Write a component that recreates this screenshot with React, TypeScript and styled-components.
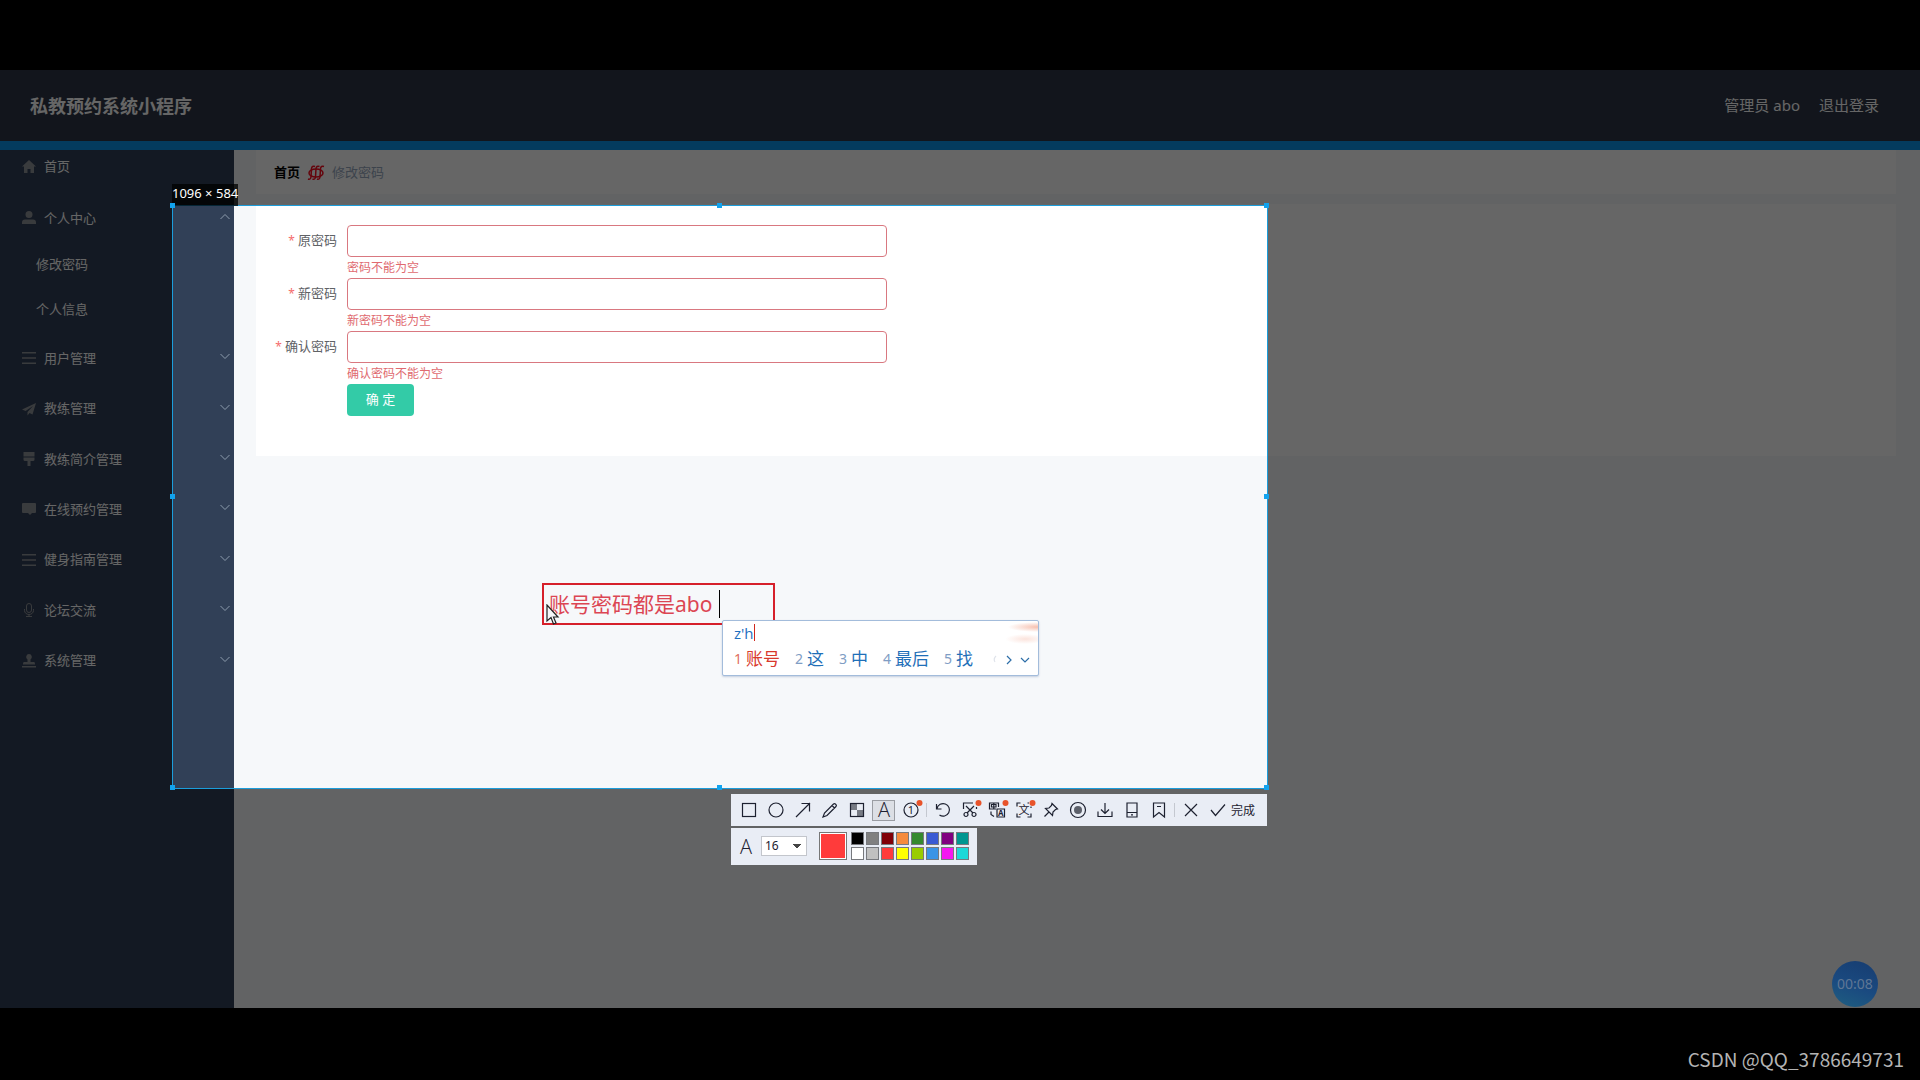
import React from "react";
import styled, { createGlobalStyle } from "styled-components";

const GlobalStyle = createGlobalStyle`
  *, *::before, *::after { box-sizing: border-box; }
  body {
    margin: 0;
    background: #000;
    font-family: "Noto Sans", "Noto Sans CJK SC", sans-serif;
    font-size: 13px;
  }
  button, input, select { font: inherit; }
  ul, ol { list-style: none; margin: 0; padding: 0; }
`;

const Page = styled.div`
  min-height: 100vh;
  display: flex;
  flex-direction: column;
  padding-top: 70px;
`;

const Stage = styled.div`
  position: relative;
  overflow: hidden;
  flex: 1;
  display: flex;
  flex-direction: column;
  background: #f6f8fa;
`;

const Credit = styled.footer`
  height: 72px;
  padding: 31px 16px 0;
  text-align: right;
  color: #b4b4b4;
  font-family: "Noto Sans CJK SC", sans-serif;
  font-size: 19px;
  line-height: 40px;
`;

const Header = styled.header`
  display: flex;
  align-items: center;
  justify-content: space-between;
  height: 80px;
  padding: 0 41px 2px 30px;
  background: #2d3646;
  border-bottom: 9px solid #0a94ec;
  color: #fff;
`;

const Title = styled.h1`
  margin: 0;
  font-size: 18px;
  font-weight: 700;
`;

const Account = styled.div`
  display: flex;
  gap: 19px;
  padding-bottom: 1px;
  font-size: 15px;
`;

const HeaderLink = styled.a`
  color: #fff;
  text-decoration: none;
`;

const Body = styled.div`
  flex: 1;
  display: flex;
`;

const Sidebar = styled.nav`
  width: 234px;
  background: #314057;
`;

const MenuGroup = styled.ul`
  display: flex;
  flex-direction: column;
  min-height: 353px;
`;

const MenuRow = styled.li<{ $tall?: boolean }>`
  flex: ${(p) => (p.$tall ? "1" : "none")};
  display: flex;
  align-items: center;
  padding: 0 3px 0 22px;
`;

const TopMenu = styled.ul`
  ${MenuRow} { height: 50px; }
  ${MenuRow}:first-child { height: 30px; margin-bottom: 12px; }
`;

const MenuLink = styled.a`
  flex: 1;
  display: flex;
  align-items: center;
  gap: 8px;
  color: #fff;
  text-decoration: none;
`;

const SubLink = styled.a`
  display: block;
  padding-left: 36px;
  line-height: 45px;
  color: #fff;
  text-decoration: none;
`;

const MenuIcon = styled.svg`
  width: 14px;
  height: 14px;
  margin-top: 2px;
  fill: #909399;
  stroke: none;
`;

const Chevron = styled.svg`
  width: 12px;
  height: 12px;
  fill: none;
  stroke: #8d9cad;
  stroke-width: 1;
`;

const Main = styled.main`
  flex: 1;
  display: flex;
  flex-direction: column;
  gap: 10px;
  padding: 0 24px 0 22px;
`;

const Crumbs = styled.nav`
  display: flex;
  align-items: center;
  gap: 7px;
  height: 44px;
  padding: 0 18px 2px;
  background: #fff;
`;

const CrumbHome = styled.a`
  color: #000;
  font-weight: 700;
  text-decoration: none;
`;

const CrumbMark = styled.svg`
  width: 18px;
  height: 16px;
  margin-top: 3px;
  fill: none;
  stroke: #fa0a1e;
  stroke-width: 1.5;
`;

const CrumbHere = styled.span`
  color: #97a8be;
`;

const Card = styled.form`
  padding: 21px 0 40px;
  background: #fff;
`;

const Field = styled.div`
  display: grid;
  grid-template-columns: 81px minmax(0, 540px);
  column-gap: 10px;
`;

const FieldLabel = styled.label`
  text-align: right;
  line-height: 30px;
  color: #606266;

  &::before {
    content: "*";
    margin-right: 3px;
    color: #f56c6c;
    font-size: 12px;
  }
`;

const FieldInput = styled.input`
  width: 100%;
  height: 32px;
  padding: 0 12px;
  border: 1px solid #d97880;
  border-radius: 4px;
  background: #fff;
  outline: none;
`;

const FieldError = styled.p`
  grid-column: 2;
  margin: 0;
  font-size: 12px;
  line-height: 21px;
  color: #e06a70;
`;

const Submit = styled.button`
  display: block;
  width: 67px;
  height: 32px;
  margin-left: 91px;
  padding: 0 0 3px;
  border: 0;
  border-radius: 4px;
  background: #33cba7;
  color: #fff;
`;

/* Screen-capture layer: everything outside the selection is dimmed. */
const Selection = styled.div`
  position: absolute;
  left: 172px;
  top: 135px;
  width: 1096px;
  height: 584px;
  border: 1px solid #1b9ddb;
  box-shadow: 0 0 0 3000px rgba(0, 0, 0, 0.6);
`;

const Handle = styled.i<{ $x: string; $y: string }>`
  position: absolute;
  left: ${(p) => p.$x};
  top: ${(p) => p.$y};
  width: 5px;
  height: 5px;
  margin: -3px;
  background: #12a3ee;
`;

const SizeTag = styled.div`
  position: absolute;
  left: -1px;
  bottom: 100%;
  padding-bottom: 4px;
  background: rgba(0, 0, 0, 0.75);
  color: #fff;
  font-size: 13px;
  line-height: 18px;
  white-space: nowrap;
`;

const Note = styled.div`
  position: absolute;
  left: 369px;
  top: 377px;
  width: 233px;
  height: 42px;
  border: 2px solid #d6202a;
`;

const NoteInput = styled.input`
  width: 100%;
  height: 36px;
  padding: 0 5px;
  border: 0;
  outline: none;
  background: transparent;
  color: #dc4653;
  font-size: 21px;
`;

const NoteCaret = styled.i`
  position: absolute;
  left: 175px;
  top: 5px;
  width: 1px;
  height: 28px;
  background: #000;
`;

const Pointer = styled.svg`
  position: absolute;
  left: 373px;
  top: 398px;
  width: 14px;
  height: 21px;
  fill: #f5f7fa;
  stroke: #222;
  stroke-width: 1.2;
`;

const Ime = styled.div`
  position: absolute;
  left: 549px;
  top: 414px;
  width: 317px;
  height: 56px;
  padding: 0 7px 0 11px;
  border: 1px solid #a3bcdb;
  border-radius: 2px;
  background: radial-gradient(ellipse 30px 5px at 100% 6px, #f6bfae, transparent),
    radial-gradient(ellipse 20px 5px at 96% 18px, #fbe3dc, transparent), #fff;
  box-shadow: 0 1px 2px rgba(80, 110, 160, 0.3);
  color: #1f6fc0;
`;

const Typed = styled.div`
  display: flex;
  align-items: center;
  height: 23px;
  font-family: "Open Sans", sans-serif;
  font-size: 15px;

  &::after {
    content: "";
    width: 1px;
    height: 17px;
    background: #d0281e;
  }
`;

const Candidates = styled.div`
  display: flex;
  align-items: center;
  justify-content: space-between;
  height: 30px;
`;

const CandidateList = styled.ol`
  display: flex;
  gap: 15px;
`;

const Candidate = styled.li<{ $first?: boolean }>`
  display: flex;
  align-items: center;
  gap: 4px;
  font-size: 17px;
  line-height: 24px;
  color: ${(p) => (p.$first ? "#d8392c" : "#1f6fb8")};
`;

const CandidateKey = styled.span<{ $first?: boolean }>`
  font-size: 14px;
  color: ${(p) => (p.$first ? "#e0705f" : "#7f9dc4")};
`;

const Pager = styled.svg`
  width: 28px;
  height: 12px;
  overflow: visible;
  fill: none;
  stroke: #2d6ea8;
  stroke-width: 1.2;
`;

const Tools = styled.div`
  position: absolute;
  top: 100%;
  right: 0;
  width: 536px;
  padding-top: 6px;
  display: flex;
  flex-direction: column;
  align-items: flex-start;
  gap: 2px;
`;

const ToolBar = styled.div`
  display: flex;
  align-items: center;
  gap: 4px;
  width: 100%;
  height: 32px;
  padding: 0 6px;
  background: #e9edf5;
`;

const Tool = styled.button<{ $on?: boolean }>`
  display: flex;
  align-items: center;
  justify-content: center;
  width: 23px;
  height: 21px;
  padding: 0;
  border: 1px solid ${(p) => (p.$on ? "#9a9da3" : "transparent")};
  background: ${(p) => (p.$on ? "#dcdfe5" : "transparent")};
`;

const Divider = styled.span`
  width: 1px;
  height: 14px;
  background: #c4c8d0;
`;

const ToolIcon = styled.svg`
  flex: none;
  width: 22px;
  height: 22px;
  overflow: visible;
  fill: none;
  stroke: #1d2130;
  stroke-width: 1.2;

  text {
    fill: #1d2130;
    stroke: none;
    text-anchor: middle;
  }
`;

const Done = styled.button`
  display: flex;
  align-items: center;
  gap: 2px;
  padding: 0 0 0 1px;
  border: 0;
  background: transparent;
  color: #1d2130;
  font-size: 12px;
`;

const StyleBar = styled.div`
  display: flex;
  align-items: center;
  height: 37px;
  padding: 0 8px 2px 4px;
  background: #e9edf5;
`;

const SizeBox = styled.label`
  display: flex;
  align-items: center;
  gap: 4px;
  margin-right: 12px;
`;

const SizeSelect = styled.select`
  width: 46px;
  height: 20px;
  padding: 0 3px;
  border: 1px solid #c3c6cc;
  border-radius: 0;
  appearance: none;
  background: linear-gradient(to bottom right, #444 50%, transparent 50%) 35px 7px / 5px 5px no-repeat,
    linear-gradient(to bottom left, #444 50%, transparent 50%) 30px 7px / 5px 5px no-repeat, #fff;
  color: #1d2130;
  font-size: 12px;
  line-height: 18px;
`;

const Current = styled.button`
  width: 28px;
  height: 28px;
  margin-right: 4px;
  border: 1px solid #777;
  padding: 0;
  background: #ff3b3b;
  box-shadow: inset 0 0 0 1px #fff;
`;

const Palette = styled.div`
  display: grid;
  grid-template-columns: repeat(8, 13px);
  gap: 2px;
`;

const Swatch = styled.button<{ $c: string }>`
  height: 13px;
  padding: 0;
  border: 1px solid #77797e;
  background: ${(p) => p.$c};
`;

const Recorder = styled.div`
  position: absolute;
  right: 42px;
  bottom: 1px;
  width: 46px;
  height: 46px;
  border-radius: 50%;
  background: linear-gradient(200deg, #173c70, #1a4a80 55%, #1f5f80);
  color: #5f7795;
  font-size: 14px;
  line-height: 46px;
  text-align: center;
`;

const menuItems: [string, React.ReactNode][] = [
  ["用户管理", <path d="M0 1h14v1.400H0zM0 6.300h14v1.400H0zM0 11.600h14V13H0z" />],
  ["教练管理", <path d="M14 1 0 7.500l3.600 1.600L11 4 5.500 10v3.500l2-2.400 3 1.400z" />],
  ["教练简介管理", <path d="M1.500 0h11v4.500h-11zM1.500 5.500h11v2q0 1.500-1.500 1.500H8.500v5h-3V9H3Q1.500 9 1.500 7.500z" />],
  ["在线预约管理", <path d="M1 1h12q1 0 1 1v8q0 1-1 1h-3l-2 2-2-2H1q-1 0-1-1V2q0-1 1-1z" />],
  ["健身指南管理", <path d="M0 1h14v1.400H0zM0 6.300h14v1.400H0zM0 11.600h14V13H0z" />],
  [
    "论坛交流",
    <g fill="none" stroke="#909399">
      <rect x="4.500" y="0.500" width="5" height="9" rx="2.500" />
      <path d="M2.500 6v1.500a4.500 4 0 0 0 9 0V6M7 11.500V14M4 13.500h6" />
    </g>,
  ],
  ["系统管理", <path d="M7 0a3 3 0 0 1 1.500 5.500V8H12q1 0 1 2v.5H1V10q0-2 1-2h3.500V5.500A3 3 0 0 1 7 0zM0 12h14v1.500H0z" />],
];

const fields = [
  ["old", "原密码", "密码不能为空"],
  ["new", "新密码", "新密码不能为空"],
  ["again", "确认密码", "确认密码不能为空"],
];

const candidates = ["账号", "这", "中", "最后", "找"];

const colors = [
  "#000000", "#808080", "#800008", "#f58a3c", "#35892e", "#3a5ad3", "#800080", "#009690",
  "#ffffff", "#c0c0c0", "#ff3b3b", "#ffff00", "#99cc00", "#3a94e6", "#f516f0", "#1cd8d8",
];

const handles = ["0%", "50%", "100%"];

const dot = <circle cx="8.500" cy="-7" r="3" fill="#e8532a" stroke="none" />;

const drawTools: [string, React.ReactNode][] = [
  ["矩形", <rect x="-6.500" y="-6.500" width="13" height="13" />],
  ["椭圆", <circle r="7" />],
  ["箭头", <path d="M-7 7 7-7M-1.500-6.500H6.500V1.500" />],
  ["画笔", <path d="M-7 7-5.500 3 3.500-6q1-.8 1.800 0l.7.700q.8 1 0 1.800L-3 5.500zM2-4.500l2.500 2.500" />],
  [
    "马赛克",
    <>
      <path d="M-6.500-6.500H0V0h-6.500zM0 0h6.500v6.500H0z" fill="#777b84" stroke="none" />
      <rect x="-6.500" y="-6.500" width="13" height="13" />
    </>,
  ],
  ["文字", <text y="7" fontSize="20" fontFamily="Open Sans" fontWeight="300">A</text>],
  [
    "序号",
    <>
      <circle r="7" />
      <text y="4" fontSize="11">1</text>
      {dot}
    </>,
  ],
];

const editTools: [string, React.ReactNode][] = [
  ["撤销", <path d="M-6.500-6v5h5M-6-1.500A6.300 6.300 0 1 1-3.500 5" />],
  [
    "裁剪",
    <>
      <path d="M-6.500-1v-6H3M6.500-3v2M-4-4 3 3M4-4-3 3" />
      <circle cx="-4" cy="4.500" r="2" />
      <circle cx="4" cy="4.500" r="2" />
      {dot}
    </>,
  ],
  [
    "翻译",
    <>
      <path d="M-1-1h-6.500v-6H1.500V-3M-5.500-5.500h4.500v2.500h-4.500zM-3.200-7v6M-6 1.500v3l3 2M0-1h7.500v8H0z" />
      <text x="3.800" y="6" fontSize="8" fontWeight="700">A</text>
      {dot}
    </>,
  ],
  [
    "识别",
    <>
      <path d="M-7-3.500V-7h3.500M-7 3.500V7h3.500M7 3.500V7H3.500M7-3.500V-2M3.500-7H5" />
      <text y="4" fontSize="11">文</text>
      {dot}
    </>,
  ],
  ["贴图", <path d="M1-6.500 6.500-1 4.500-.500 2 2l-.500 3.500-7-7L-2-2 .500-4.500zM-2 2-6.500 6.500" />],
  [
    "录屏",
    <>
      <circle r="7.500" />
      <circle r="4" fill="#5c606a" stroke="none" />
    </>,
  ],
  ["保存", <path d="M0-7V3.500M-4-.500 0 3.500 4-.500M-7 1.500v5H7v-5" />],
  ["手机", <path d="M-5-7H5V7H-5zM-5 2.500H5M-1 4.800h2" />],
  ["收藏", <path d="M-5.500-7h11V7L0 2.500-5.500 7zM-2-3.500h4" />],
];

function ToolButton({ name, on, children }: { name: string; on?: boolean; children: React.ReactNode }) {
  return (
    <Tool type="button" aria-label={name} $on={on}>
      <ToolIcon viewBox="-11 -11 22 22">{children}</ToolIcon>
    </Tool>
  );
}

export default function App() {
  return (
    <Page>
      <GlobalStyle />
      <Stage>
        <Header>
          <Title>私教预约系统小程序</Title>
          <Account>
            <span>管理员 abo</span>
            <HeaderLink href="#logout">退出登录</HeaderLink>
          </Account>
        </Header>
        <Body>
          <Sidebar>
            <TopMenu>
              <MenuRow>
                <MenuLink href="#home">
                  <MenuIcon viewBox="0 0 14 14">
                    <path d="M7 1 0 7.500h2V14h3.500v-4h3v4H12V7.500h2z" />
                  </MenuIcon>
                  首页
                </MenuLink>
              </MenuRow>
              <MenuRow>
                <MenuLink href="#me">
                  <MenuIcon viewBox="0 0 14 14">
                    <path d="M7 0a3.500 3.500 0 1 1 0 7 3.500 3.500 0 0 1 0-7zM3 8.500h8q3 0 3 3V13H0v-1.500q0-3 3-3z" />
                  </MenuIcon>
                  个人中心
                </MenuLink>
                <Chevron viewBox="0 0 12 12"><path d="m1.500 8 4.500-4.500L10.500 8" /></Chevron>
              </MenuRow>
              <li><SubLink href="#password">修改密码</SubLink></li>
              <li><SubLink href="#profile">个人信息</SubLink></li>
            </TopMenu>
            <MenuGroup>
              {menuItems.map(([name, icon]) => (
                <MenuRow key={name} $tall>
                  <MenuLink href="#menu">
                    <MenuIcon viewBox="0 0 14 14">{icon}</MenuIcon>
                    {name}
                  </MenuLink>
                  <Chevron viewBox="0 0 12 12"><path d="m1.500 3 4.500 4.500L10.500 3" /></Chevron>
                </MenuRow>
              ))}
            </MenuGroup>
          </Sidebar>
          <Main>
            <Crumbs>
              <CrumbHome href="#home">首页</CrumbHome>
              <CrumbMark viewBox="0 0 18 16">
                <path d="M8 1.500q-3-1-3.500 2L4 12q-.5 3-3 2M12.500 1.500q-3-1-3.500 2L8.500 12q-.5 3-3 2M17 1.500q-3-1-3.500 2L13 12q-.5 3-3 2" />
                <ellipse cx="9" cy="8" rx="7" ry="4" />
              </CrumbMark>
              <CrumbHere>修改密码</CrumbHere>
            </Crumbs>
            <Card>
              {fields.map(([id, label, error]) => (
                <Field key={id}>
                  <FieldLabel htmlFor={id}>{label}</FieldLabel>
                  <FieldInput id={id} type="password" />
                  <FieldError>{error}</FieldError>
                </Field>
              ))}
              <Submit type="button">确 定</Submit>
            </Card>
          </Main>
        </Body>

        <Selection>
          <SizeTag>1096 × 584</SizeTag>
          {handles.map((x) =>
            handles.map((y) => (x === "50%" && y === "50%" ? null : <Handle key={x + y} $x={x} $y={y} />))
          )}
          <Note>
            <NoteInput aria-label="标注文字" defaultValue="账号密码都是abo" />
            <NoteCaret />
          </Note>
          <Pointer viewBox="0 0 14 21">
            <path d="M1 1v16l4-3.500L7.500 20l2.500-1-2.500-6H12z" />
          </Pointer>
          <Ime>
            <Typed>z'h</Typed>
            <Candidates>
              <CandidateList>
                {candidates.map((word, i) => (
                  <Candidate key={word} $first={i === 0}>
                    <CandidateKey $first={i === 0}>{i + 1}</CandidateKey>
                    {word}
                  </Candidate>
                ))}
              </CandidateList>
              <Pager viewBox="0 0 28 12">
                <path d="M-7 3q-3 3-1 6" stroke="#dfe3ea" />
                <path d="m4 3 4 4-4 4M18 5l4 4 4-4" />
              </Pager>
            </Candidates>
          </Ime>
          <Tools>
            <ToolBar>
              {drawTools.map(([name, icon]) => (
                <ToolButton key={name} name={name} on={name === "文字"}>{icon}</ToolButton>
              ))}
              <Divider />
              {editTools.map(([name, icon]) => (
                <ToolButton key={name} name={name}>{icon}</ToolButton>
              ))}
              <Divider />
              <ToolButton name="取消"><path d="M-6-6 6 6M6-6-6 6" /></ToolButton>
              <Done type="button">
                <ToolIcon viewBox="-11 -11 22 22"><path d="M-7 0-2.500 5.500 7-5.500" /></ToolIcon>
                完成
              </Done>
            </ToolBar>
            <StyleBar>
              <SizeBox>
                <ToolIcon viewBox="-11 -11 22 22">
                  <text y="8" fontSize="20" fontFamily="Open Sans" fontWeight="300">A</text>
                </ToolIcon>
                <SizeSelect aria-label="字号" defaultValue="16">
                  <option>12</option>
                  <option>16</option>
                  <option>20</option>
                </SizeSelect>
              </SizeBox>
              <Current type="button" aria-label="当前颜色" />
              <Palette>
                {colors.map((c) => (
                  <Swatch key={c} type="button" aria-label={c} $c={c} />
                ))}
              </Palette>
            </StyleBar>
          </Tools>
        </Selection>
        <Recorder>00:08</Recorder>
      </Stage>
      <Credit>CSDN @QQ_3786649731</Credit>
    </Page>
  );
}
